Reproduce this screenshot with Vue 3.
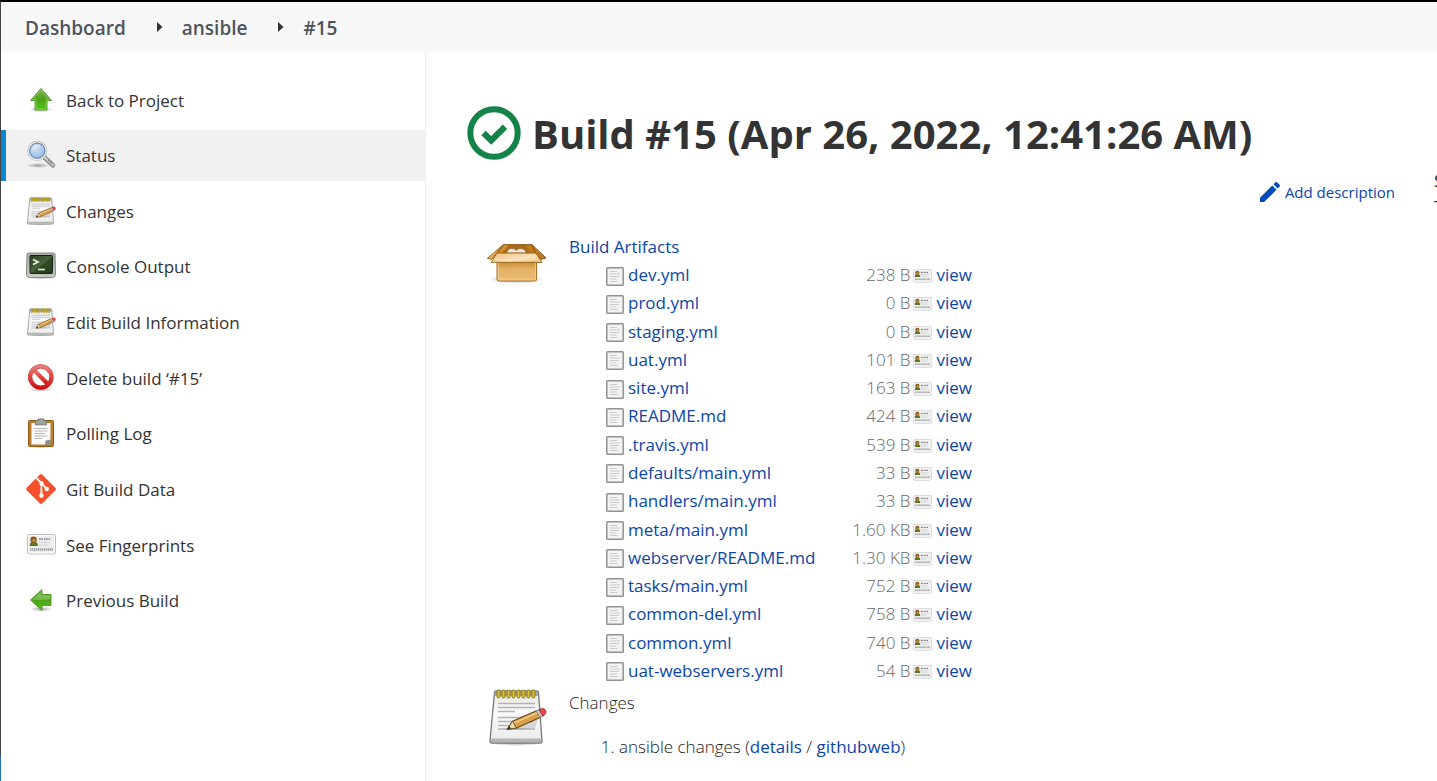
<script setup>
const crumbs = ['Dashboard', 'ansible', '#15']

const tasks = [
  { label: 'Back to Project', icon: 'up' },
  { label: 'Status', icon: 'search', active: true },
  { label: 'Changes', icon: 'notepad' },
  { label: 'Console Output', icon: 'terminal' },
  { label: 'Edit Build Information', icon: 'notepad' },
  { label: 'Delete build ‘#15’', icon: 'delete' },
  { label: 'Polling Log', icon: 'clipboard' },
  { label: 'Git Build Data', icon: 'git' },
  { label: 'See Fingerprints', icon: 'card' },
  { label: 'Previous Build', icon: 'previous' },
]

const artifacts = [
  ['dev.yml', '238 B'],
  ['prod.yml', '0 B'],
  ['staging.yml', '0 B'],
  ['uat.yml', '101 B'],
  ['site.yml', '163 B'],
  ['README.md', '424 B'],
  ['.travis.yml', '539 B'],
  ['defaults/main.yml', '33 B'],
  ['handlers/main.yml', '33 B'],
  ['meta/main.yml', '1.60 KB'],
  ['webserver/README.md', '1.30 KB'],
  ['tasks/main.yml', '752 B'],
  ['common-del.yml', '758 B'],
  ['common.yml', '740 B'],
  ['uat-webservers.yml', '54 B'],
]
</script>

<template>
  <div class="page">
    <svg class="sprite" width="0" height="0" aria-hidden="true">
      <defs>
        <linearGradient id="g-green" x1="0" y1="0" x2="0" y2="1">
          <stop offset="0" stop-color="#7cb350" />
          <stop offset="0.5" stop-color="#4fa01c" />
          <stop offset="1" stop-color="#4cc80a" />
        </linearGradient>
        <linearGradient id="g-paper" x1="0" y1="0" x2="0" y2="1">
          <stop offset="0" stop-color="#e4e4e4" />
          <stop offset="0.4" stop-color="#fafafa" />
          <stop offset="1" stop-color="#ececec" />
        </linearGradient>
        <linearGradient id="g-red" x1="0" y1="0" x2="0" y2="1">
          <stop offset="0" stop-color="#ea7c7c" />
          <stop offset="1" stop-color="#d01010" />
        </linearGradient>
        <linearGradient id="g-screen" x1="0" y1="0" x2="1" y2="1">
          <stop offset="0" stop-color="#2c4424" />
          <stop offset="0.5" stop-color="#486339" />
          <stop offset="0.55" stop-color="#304a26" />
          <stop offset="1" stop-color="#253c1e" />
        </linearGradient>
        <linearGradient id="g-metal" x1="0" y1="0" x2="0" y2="1">
          <stop offset="0" stop-color="#a9aba6" />
          <stop offset="1" stop-color="#c9cbc7" />
        </linearGradient>
        <linearGradient id="g-box" x1="0" y1="0" x2="0" y2="1">
          <stop offset="0" stop-color="#c98d33" />
          <stop offset="0.35" stop-color="#e3b064" />
          <stop offset="1" stop-color="#ebbf78" />
        </linearGradient>
        <linearGradient id="g-flap" x1="0" y1="0" x2="1" y2="1">
          <stop offset="0" stop-color="#eebf74" />
          <stop offset="0.6" stop-color="#fbe3bd" />
          <stop offset="1" stop-color="#efc17a" />
        </linearGradient>
        <radialGradient id="g-lens" cx="0.4" cy="0.35" r="0.7">
          <stop offset="0" stop-color="#d3e3f5" />
          <stop offset="1" stop-color="#8fb3df" />
        </radialGradient>
        <radialGradient id="g-shade">
          <stop offset="0" stop-color="#000" stop-opacity="0.35" />
          <stop offset="1" stop-color="#000" stop-opacity="0" />
        </radialGradient>
      </defs>

      <symbol id="i-up" viewBox="0 0 32 32">
        <ellipse cx="16" cy="25.5" rx="12" ry="2.8" fill="url(#g-shade)" />
        <path d="M16 4.500 26.500 16.500H22V26H10V16.500H5.500Z" fill="url(#g-green)" stroke="#5a9a34" stroke-linejoin="round" />
        <path d="M16 6.200 24.200 15.600H21V25H11V15.600H7.800Z" fill="none" stroke="#a8dd83" stroke-width="0.700" opacity="0.800" />
      </symbol>

      <symbol id="i-previous" viewBox="0 0 32 32">
        <ellipse cx="16" cy="25" rx="11" ry="2.800" fill="url(#g-shade)" />
        <path d="M5.500 16 17 5.500V10.500H26V21.500H17V26.500Z" fill="url(#g-green)" stroke="#5a9a34" stroke-linejoin="round" />
        <path d="M7.300 16 16 8V11.500H25V15.500Z" fill="#a8dd83" opacity="0.450" />
      </symbol>

      <symbol id="i-search" viewBox="0 0 32 32">
        <ellipse cx="13" cy="26.500" rx="12" ry="2.600" fill="url(#g-shade)" />
        <path d="M19.500 18.500 28 26.200" stroke="#7d7d7d" stroke-width="4.600" stroke-linecap="round" />
        <path d="M20 18.800 28 26" stroke="#c9c9c9" stroke-width="2.800" stroke-linecap="round" />
        <path d="M23 20.800 27.500 24.800" stroke="#8a8a8a" stroke-width="1.200" />
        <circle cx="12.300" cy="11.700" r="8.900" fill="url(#g-lens)" stroke="#aaaca9" stroke-width="2.200" />
        <circle cx="12.300" cy="11.700" r="8.900" fill="none" stroke="#ececec" stroke-width="1.200" />
        <circle cx="12.300" cy="11.700" r="7.500" fill="none" stroke="#5d88bd" stroke-width="1" />
        <path d="M6.500 12A6 6 0 0 1 16 7.200C13 8 9 9 6.500 12Z" fill="#fff" opacity="0.450" />
      </symbol>

      <symbol id="i-notepad" viewBox="0 0 64 64">
        <ellipse cx="31" cy="58" rx="28" ry="3" fill="url(#g-shade)" />
        <path d="M9.500 7.500Q9.600 6 11 6H52Q53.400 6 53.500 7.500L57 56Q57 58 55 58H7Q5 58 5 56Z" fill="url(#g-paper)" stroke="#777975" stroke-width="1.300" />
        <path d="M10 6.500H53L53.400 11H9.600Z" fill="#a5a7a3" />
        <path d="M5.800 53.500H56.300V56Q56.300 57.300 55 57.300H7Q5.800 57.300 5.800 56Z" fill="#b4b6b2" />
        <path d="M13 18.500H50M13 22.500H50M13 26.500H30M13 32.500H40M13 36.500H48M13 40.500H30M13 44H50" stroke="#b3b3b3" stroke-width="1.300" />
        <g fill="#d9c233" stroke="#8a7711" stroke-width="1">
          <rect x="12" y="5" width="3" height="8" rx="1.500" />
          <rect x="17" y="5" width="3" height="8" rx="1.500" />
          <rect x="22" y="5" width="3" height="8" rx="1.500" />
          <rect x="27" y="5" width="3" height="8" rx="1.500" />
          <rect x="32" y="5" width="3" height="8" rx="1.500" />
          <rect x="37" y="5" width="3" height="8" rx="1.500" />
          <rect x="42" y="5" width="3" height="8" rx="1.500" />
          <rect x="47" y="5" width="3" height="8" rx="1.500" />
        </g>
        <path d="M22 45.500 50 43 54 32Z" fill="#000" opacity="0.120" />
        <path d="M22.300 44.300 27.500 36.200 51.500 25.700 55.500 32.300 31.500 43Z" fill="#d9a04a" stroke="#6a4a1c" stroke-width="1.200" stroke-linejoin="round" />
        <path d="M28.500 38.300 52.300 27.800" stroke="#f2cd8a" stroke-width="1.600" />
        <path d="M22.300 44.300 27.500 36.200 31.500 43Z" fill="#f0d9ae" stroke="#6a4a1c" stroke-width="0.900" />
        <path d="M22 44.600 24.200 41 26 43.400Z" fill="#2b2b2b" />
        <path d="M51 25.900 54 24.600 58 31.200 55 32.500Z" fill="#c5c7c9" stroke="#777" stroke-width="0.800" />
        <path d="M54 24.600 57 23.600Q60 23.300 61 26Q61.500 29 58 31.200Z" fill="#f0464a" stroke="#8d3030" stroke-width="0.800" />
      </symbol>

      <symbol id="i-terminal" viewBox="0 0 32 32">
        <ellipse cx="16" cy="27.700" rx="13" ry="1.600" fill="url(#g-shade)" />
        <path d="M3.500 3H28.500Q30 3 30 4.500L30.500 24Q30.500 27.500 27.500 27.500H4.500Q1.500 27.500 1.500 24L2 4.500Q2 3 3.500 3Z" fill="url(#g-metal)" stroke="#858782" />
        <rect x="5" y="5.500" width="22.500" height="18" rx="0.800" fill="url(#g-screen)" stroke="#182014" />
        <path d="M8 9.500 13 12 8 14.500" fill="none" stroke="#eaf2e6" stroke-width="1.700" />
        <path d="M13 19.500H20" stroke="#dfe9da" stroke-width="1.600" />
        <path d="M20.500 25.500H23" stroke="#8ede42" stroke-width="1.200" />
      </symbol>

      <symbol id="i-delete" viewBox="0 0 32 32">
        <ellipse cx="16" cy="27.500" rx="12" ry="2.300" fill="url(#g-shade)" />
        <circle cx="15.800" cy="15" r="10.500" fill="#fff" />
        <path d="M8.500 7.500 23.200 22.500" stroke="url(#g-red)" stroke-width="4.200" />
        <circle cx="15.800" cy="15" r="10.700" fill="none" stroke="#c83030" stroke-width="4.200" />
        <circle cx="15.800" cy="15" r="10.700" fill="none" stroke="url(#g-red)" stroke-width="3.400" />
      </symbol>

      <symbol id="i-clipboard" viewBox="0 0 32 32">
        <ellipse cx="16" cy="29.700" rx="12" ry="1.500" fill="url(#g-shade)" />
        <rect x="3.500" y="3.500" width="25" height="26" rx="1.200" fill="#b97c2a" stroke="#8d5a12" />
        <path d="M6.500 6H25.500V23L21.500 27.500H6.500Z" fill="#fafafa" />
        <path d="M20 28 20.500 23.500 26 22.500 25.500 27.500Z" fill="#8d8f8c" />
        <path d="M9.500 11.500H22.500M9.500 14H22.500M9.500 16.500H20M9.500 19H22.500M9.500 21.500H17" stroke="#b5b7b3" stroke-width="1" />
        <path d="M10.500 7.800V4.500Q10.500 3.500 12 3.500H13V2H19V3.500H20Q21.500 3.500 21.500 4.500V7.800Z" fill="#a1a39f" stroke="#6f716d" stroke-width="0.900" />
      </symbol>

      <symbol id="i-git" viewBox="0 0 32 32">
        <path d="M14.600 1.800Q16 .4 17.400 1.800L30.400 14.700Q31.600 16 30.400 17.300L17.400 30.300Q16 31.600 14.600 30.300L1.700 17.300Q.4 16 1.700 14.700Z" fill="#f4512c" />
        <path d="M11.500 5 16.400 10V22.500M16.400 10 21.800 15.800" fill="none" stroke="#fff" stroke-width="1.800" />
        <circle cx="16.400" cy="10.200" r="2.200" fill="#fff" />
        <circle cx="21.800" cy="16" r="2.200" fill="#fff" />
        <circle cx="16.400" cy="22.600" r="2.300" fill="#fff" />
      </symbol>

      <symbol id="i-card" viewBox="2 5 29 21">
        <rect x="2.500" y="5.500" width="28" height="19.500" rx="2" fill="#eee" stroke="#bdbdbd" />
        <rect x="3.500" y="6.500" width="26" height="17.500" rx="1.300" fill="none" stroke="#fafafa" />
        <path d="M4.800 17V15Q5 13.500 7 13H10.500Q12.500 13.500 12.800 15V17Z" fill="#547a1e" />
        <circle cx="8.600" cy="10.700" r="3.200" fill="#8b5a1e" />
        <circle cx="8.900" cy="11.500" r="1.700" fill="#c48a4c" />
        <path d="M14 10H18M19 10H25" stroke="#555" stroke-width="1.200" stroke-dasharray="1.700 .4" />
        <path d="M14 13.500H25M14 16H23" stroke="#d4d4d4" stroke-width="1.200" />
        <path d="M5 20.500H28" stroke="#a6a6a6" stroke-width="2.400" stroke-dasharray="1.500 .5" />
      </symbol>

      <symbol id="i-file" viewBox="0 0 18 19">
        <rect x="0.800" y="0.800" width="16.400" height="17.400" rx="0.800" fill="#f3f3f3" stroke="#929292" stroke-width="1.500" />
        <path d="M4 4.500H11M4 7H14M4 9.500H13M4 12H10.500M4 14.500H11.500" stroke="#cbcbcb" stroke-width="1.100" />
      </symbol>
    </svg>

    <header class="breadcrumbs">
      <nav aria-label="Breadcrumb">
        <ol>
          <li v-for="(crumb, i) in crumbs" :key="crumb">
            <svg v-if="i" class="caret" viewBox="0 0 6 10" aria-hidden="true"><path d="M0 0 5.500 5 0 10Z" fill="#333" /></svg>
            <a href="#">{{ crumb }}</a>
          </li>
        </ol>
      </nav>
    </header>

    <div class="body">
      <nav class="side" aria-label="Build tasks">
        <ul>
          <li v-for="task in tasks" :key="task.label">
            <a href="#" :class="{ active: task.active }">
              <svg :class="['icon', { flat: task.icon === 'card' }]" aria-hidden="true"><use :href="'#i-' + task.icon" /></svg>
              <span>{{ task.label }}</span>
            </a>
          </li>
        </ul>
      </nav>

      <main class="main">
        <h1>
          <svg class="result" viewBox="0 0 54 54" aria-hidden="true">
            <circle cx="27" cy="27" r="23.700" fill="none" stroke="#138347" stroke-width="6" />
            <path d="M16.500 27 24.200 34.500 38 20.700" fill="none" stroke="#138347" stroke-width="6.200" />
          </svg>
          <span>Build #15 (Apr 26, 2022, 12:41:26 AM)</span>
        </h1>

        <div class="info">
          <a class="describe" href="#">
            <svg viewBox="3 3 18 18" aria-hidden="true"><path d="M3 17.250V21h3.750L17.810 9.940l-3.750-3.750L3 17.250zM20.710 7.040a1 1 0 0 0 0-1.410l-2.340-2.340a1 1 0 0 0-1.410 0l-1.830 1.830 3.750 3.750 1.830-1.830z" fill="#004bb8" /></svg>
            <span>Add description</span>
          </a>
          <div class="timing">
            <div>S</div>
            <div>T</div>
          </div>
        </div>

        <section class="block artifacts">
          <svg class="large" viewBox="12 -12 192 192" aria-hidden="true">
            <ellipse cx="110" cy="142" rx="82" ry="14" fill="url(#g-shade)" />
            <path d="M70 38H156L168 64H50Z" fill="#a8691a" stroke="#8a5610" stroke-width="3" />
            <path d="M72 40H86L66 62H54Z" fill="#d08e2e" />
            <path d="M138 40H154L164 62H150Z" fill="#c27c1c" />
            <path d="M82 62Q82 51 96 51Q106 51 109 57Q113 50 124 51Q136 53 137 62Z" fill="#ededed" stroke="#c5c5c5" />
            <path d="M70 38 50 63 35 82 22 79Z" fill="#e6b165" stroke="#a06a1c" stroke-width="3" stroke-linejoin="round" />
            <path d="M156 38 198 78 183 82 167 63Z" fill="#bb7d25" stroke="#8a5610" stroke-width="3" stroke-linejoin="round" />
            <path d="M51 90H170V141Q170 147 164 147H57Q51 147 51 141Z" fill="url(#g-box)" stroke="#a06a1c" stroke-width="3" />
            <path d="M54.500 93V140Q54.500 143.500 58 143.500H163Q166.500 143.500 166.500 140V93" fill="none" stroke="#f6d9a6" stroke-width="2" />
            <path d="M51 63H167L186 91H34Z" fill="url(#g-flap)" stroke="#a06a1c" stroke-width="3" stroke-linejoin="round" />
          </svg>
          <div class="content">
            <a href="#">Build Artifacts</a>
            <table>
              <tbody>
                <tr v-for="[name, size] in artifacts" :key="name">
                  <td>
                    <a class="file" href="#"><svg class="doc" aria-hidden="true"><use href="#i-file" /></svg><span>{{ name }}</span></a>
                  </td>
                  <td class="size">{{ size }}</td>
                  <td>
                    <a class="view" href="#" :aria-label="'view ' + name"><svg class="print" aria-hidden="true"><use href="#i-card" /></svg><span>view</span></a>
                  </td>
                </tr>
              </tbody>
            </table>
          </div>
        </section>

        <section class="block changes">
          <svg class="large" viewBox="-1 0 64 64" aria-hidden="true"><use href="#i-notepad" width="64" height="64" /></svg>
          <div class="content">
            <div>Changes</div>
            <ol>
              <li>ansible changes (<a href="#">details</a> / <a href="#">githubweb</a>)</li>
            </ol>
          </div>
        </section>
      </main>
    </div>
  </div>
</template>

<style>
body {
  background: #fff;
}
</style>

<style scoped>
.page {
  display: flex;
  flex-direction: column;
  min-height: 100vh;
  box-sizing: border-box;
  padding-left: 1px;
  overflow: hidden;
  background: linear-gradient(#444 755px, #2670a8 755px) left top / 1px 100% no-repeat;
  color: #222;
  font: 300 17px/28px "Open Sans", "Noto Sans", sans-serif;
}
.sprite {
  position: absolute;
}
a {
  color: #0b45a8;
  font-weight: 500;
  text-decoration: none;
}
ul,
ol {
  margin: 0;
  padding: 0;
}
.breadcrumbs {
  padding-left: 24px;
  margin-left: -1px;
  border-top: 2px solid #000;
  border-left: 1px solid #444;
  background: #f8f8f8;
}
.breadcrumbs ol {
  display: flex;
  list-style: none;
}
.breadcrumbs li {
  display: flex;
  align-items: center;
  height: 50px;
}
.breadcrumbs a {
  padding-top: 2px;
  color: #4d545d;
  font-size: 19px;
  font-weight: 600;
}
.caret {
  width: 6px;
  height: 10px;
  margin: 0 19px 0 31px;
}
.body {
  display: flex;
  flex: 1;
}
.side {
  flex: none;
  width: 424px;
  padding-top: 22px;
  border-right: 1px solid #f0f0f0;
}
.side ul {
  display: flex;
  flex-direction: column;
  justify-content: space-between;
  height: 552px;
  list-style: none;
}
.side a {
  display: flex;
  align-items: center;
  gap: 9px;
  height: 51px;
  padding-left: 24px;
  color: #333;
}
.side a.active {
  padding-left: 19px;
  border-left: 5px solid #0b87d1;
  background: #f1f1f1;
}
.side span {
  padding-top: 2px;
}
.icon {
  flex: none;
  width: 32px;
  height: 32px;
}
.icon.flat {
  width: 29px;
  height: 21px;
  margin: 0 1px 0 2px;
}
.main {
  flex: 1;
  min-width: 0;
  padding: 53px 0 0 41px;
}
h1 {
  display: flex;
  align-items: center;
  gap: 11px;
  margin: 0;
  color: #333;
  font-size: 40px;
  font-weight: 700;
  line-height: 54px;
  white-space: nowrap;
}
h1 span {
  padding-top: 2px;
}
.result {
  flex: none;
  width: 54px;
  height: 54px;
}
.info {
  display: flex;
  justify-content: flex-end;
  gap: 39px;
  height: 52px;
  margin-top: 7px;
}
.describe {
  display: flex;
  align-items: center;
  gap: 5px;
  height: 48px;
  font-size: 15px;
}
.describe svg {
  width: 20px;
  height: 20px;
}
.timing {
  width: 3px;
  overflow: hidden;
  font-weight: 400;
  line-height: 26px;
}
.block {
  display: flex;
  gap: 21px;
  padding-left: 17px;
}
.large {
  flex: none;
  width: 64px;
  height: 64px;
}
.artifacts .large {
  margin-top: 8px;
}
.artifacts .content {
  margin-top: 13px;
}
.changes .content {
  margin-top: 4px;
}
table {
  height: 424px;
  margin-left: 37px;
  border-collapse: collapse;
}
td {
  padding: 0;
}
.size {
  padding: 0 3px 0 37px;
  color: #666;
  text-align: right;
}
.file,
.view {
  display: flex;
  align-items: center;
  gap: 4px;
}
.doc {
  width: 18px;
  height: 19px;
  margin-top: 2px;
}
.print {
  width: 19px;
  height: 14px;
  margin-top: 2px;
}
.content ol {
  margin-top: 16px;
  padding-left: 50px;
}
</style>
